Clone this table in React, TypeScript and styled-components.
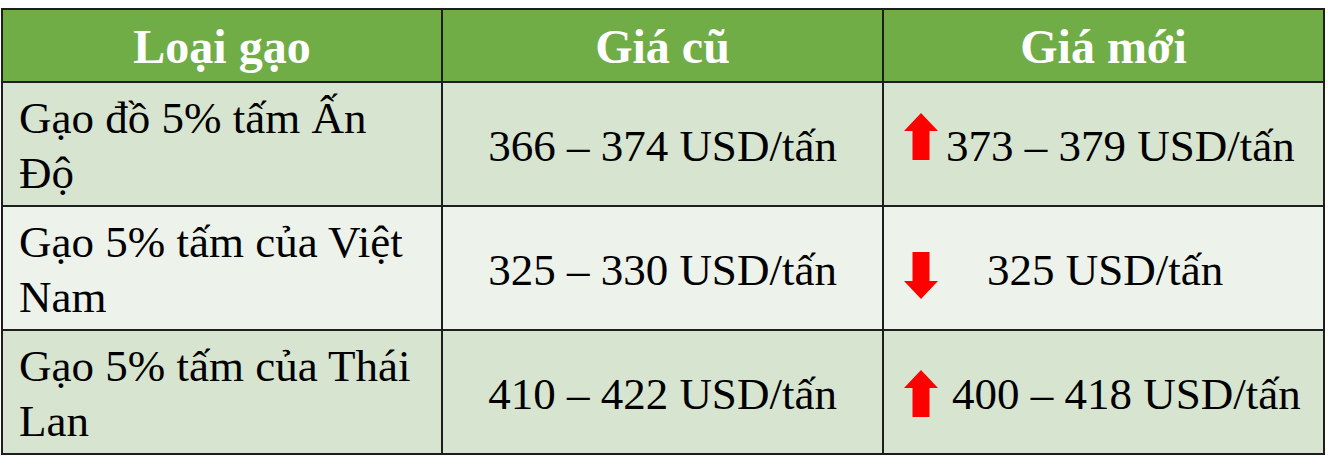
import React from "react";
import styled, { createGlobalStyle } from "styled-components";

const serif = `"Liberation Serif", "Times New Roman", serif`;

const GlobalStyle = createGlobalStyle`
  html, body {
    margin: 0;
    padding: 0;
    background: #ffffff;
  }
  body {
    font-family: ${serif};
  }
`;

const Page = styled.div`
  padding: 8px 0 0 1px;
`;

const Grid = styled.div`
  display: grid;
  grid-template-columns: 438px 439px 439px;
  grid-template-rows: 71px repeat(3, 122px);
  gap: 2px;
  padding: 2px;
  width: max-content;
  background: #1e1e1e;
  font-family: ${serif};
`;

const HeadCell = styled.div`
  display: flex;
  align-items: center;
  justify-content: center;
  padding-top: 2px;
  background: #70ad47;
  color: #ffffff;
  font-size: 48px;
  font-weight: 700;
  line-height: 1;
`;

const Cell = styled.div<{ $band: boolean; $align?: "left" | "center" }>`
  display: flex;
  align-items: center;
  justify-content: ${(p) => (p.$align === "left" ? "flex-start" : "center")};
  padding: ${(p) => (p.$align === "left" ? "3px 14px 0 16px" : "4px 0 0")};
  background: ${(p) => (p.$band ? "#d7e4d0" : "#edf2eb")};
  color: #000000;
  font-size: 45px;
  font-weight: 400;
  line-height: 55px;
  box-sizing: border-box;
`;

const PriceCell = styled(Cell)`
  justify-content: flex-start;
  padding: 4px 0 0 20px;
`;

const ArrowBox = styled.span<{ $top: number }>`
  display: flex;
  flex: none;
  align-self: flex-start;
  margin-top: ${(p) => p.$top}px;
  svg {
    display: block;
  }
`;

const Price = styled.span<{ $offset: number }>`
  margin-left: ${(p) => p.$offset}px;
  white-space: nowrap;
`;

type Row = {
  name: string;
  oldPrice: string;
  newPrice: string;
  down: boolean;
  offset: number;
  arrowTop: number;
};

const rows: Row[] = [
  {
    name: "Gạo đồ 5% tấm Ấn Độ",
    oldPrice: "366 – 374 USD/tấn",
    newPrice: "373 – 379 USD/tấn",
    down: false,
    offset: 8,
    arrowTop: 26,
  },
  {
    name: "Gạo 5% tấm của Việt Nam",
    oldPrice: "325 – 330 USD/tấn",
    newPrice: "325 USD/tấn",
    down: true,
    offset: 49,
    arrowTop: 41,
  },
  {
    name: "Gạo 5% tấm của Thái Lan",
    oldPrice: "410 – 422 USD/tấn",
    newPrice: "400 – 418 USD/tấn",
    down: false,
    offset: 14,
    arrowTop: 35,
  },
];

const Arrow: React.FC<{ down: boolean }> = ({ down }) => (
  <svg width="34" height="47" viewBox="0 0 34 47">
    {down ? (
      <polygon points="8.5,0 25.5,0 25.5,29 34,29 17,47 0,29 8.5,29" fill="#ff0000" />
    ) : (
      <polygon points="17,0 34,18 25.5,18 25.5,47 8.5,47 8.5,18 0,18" fill="#ff0000" />
    )}
  </svg>
);

export default function App() {
  return (
    <>
      <GlobalStyle />
      <Page>
        <Grid>
          <HeadCell>Loại gạo</HeadCell>
          <HeadCell>Giá cũ</HeadCell>
          <HeadCell>Giá mới</HeadCell>
          {rows.map((r, i) => (
            <React.Fragment key={r.name}>
              <Cell $band={i % 2 === 0} $align="left">
                {r.name}
              </Cell>
              <Cell $band={i % 2 === 0}>{r.oldPrice}</Cell>
              <PriceCell $band={i % 2 === 0}>
                <ArrowBox $top={r.arrowTop}>
                  <Arrow down={r.down} />
                </ArrowBox>
                <Price $offset={r.offset}>{r.newPrice}</Price>
              </PriceCell>
            </React.Fragment>
          ))}
        </Grid>
      </Page>
    </>
  );
}
